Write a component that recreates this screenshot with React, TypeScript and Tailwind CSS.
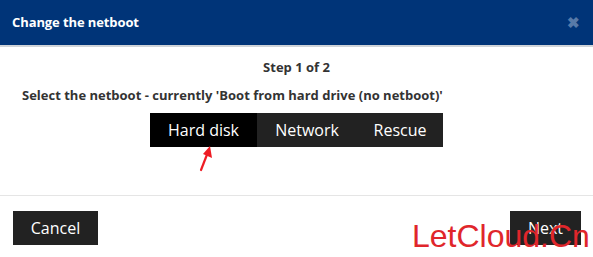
import React from "react";

export default function App() {
  return (
    <div className="relative w-[593px] h-[257px] bg-white overflow-hidden" style={{ fontFamily: '"Open Sans", sans-serif' }}>
      <div className="h-[45px] bg-[#003478] flex items-center justify-between pl-[12px] pr-[13px] border-b-2 border-[#cfd3d8] box-content">
        <span className="text-white font-bold text-[13px] tracking-[-0.1px]">Change the netboot</span>
        <span className="text-[#587aa8] font-bold text-[15px] leading-none">✖</span>
      </div>
      <div className="flex flex-col items-center pt-[11px]">
        <div className="text-[#333] font-bold text-[13px] leading-[18px]">Step 1 of 2</div>
        <div className="self-start ml-[22px] mt-[10px] text-[#333] font-bold text-[13px] leading-[18px]">
          Select the netboot - currently 'Boot from hard drive (no netboot)'
        </div>
        <div className="flex mt-[9px] h-[34px] text-white text-[16px] leading-none">
          <div className="bg-black w-[107px] flex items-center justify-center pb-[1px]">Hard disk</div>
          <div className="bg-[#222] w-[100px] flex items-center justify-center pb-[1px]">Network</div>
          <div className="bg-[#222] w-[86px] flex items-center justify-center pb-[1px]">Rescue</div>
        </div>
      </div>
      <div className="mt-[48px] border-t border-[#e5e5e5]"></div>
      <div className="flex justify-between pl-[13px] pr-[12px] pt-[15px]">
        <div className="bg-[#222] w-[85px] h-[34px] flex items-center justify-center text-white text-[16px] leading-none pb-[1px]">Cancel</div>
        <div className="bg-[#222] w-[71px] h-[34px] flex items-center justify-center text-white text-[16px] leading-none pb-[1px]">Next</div>
      </div>
      <svg className="absolute left-[195px] top-[143px]" width="22" height="30" viewBox="0 0 22 30">
        <line x1="6" y1="27" x2="13" y2="9" stroke="#ee1c24" strokeWidth="2.2" strokeLinecap="round" />
        <polygon points="15,3 17,15 8,11" fill="#ee1c24" />
      </svg>
      <div
        className="absolute left-[412px] top-[216px] text-[#e0262b] text-[32px] leading-[40px]"
        style={{ fontFamily: '"Liberation Sans", Arial, sans-serif' }}
      >
        LetCloud.Cn
      </div>
    </div>
  );
}
